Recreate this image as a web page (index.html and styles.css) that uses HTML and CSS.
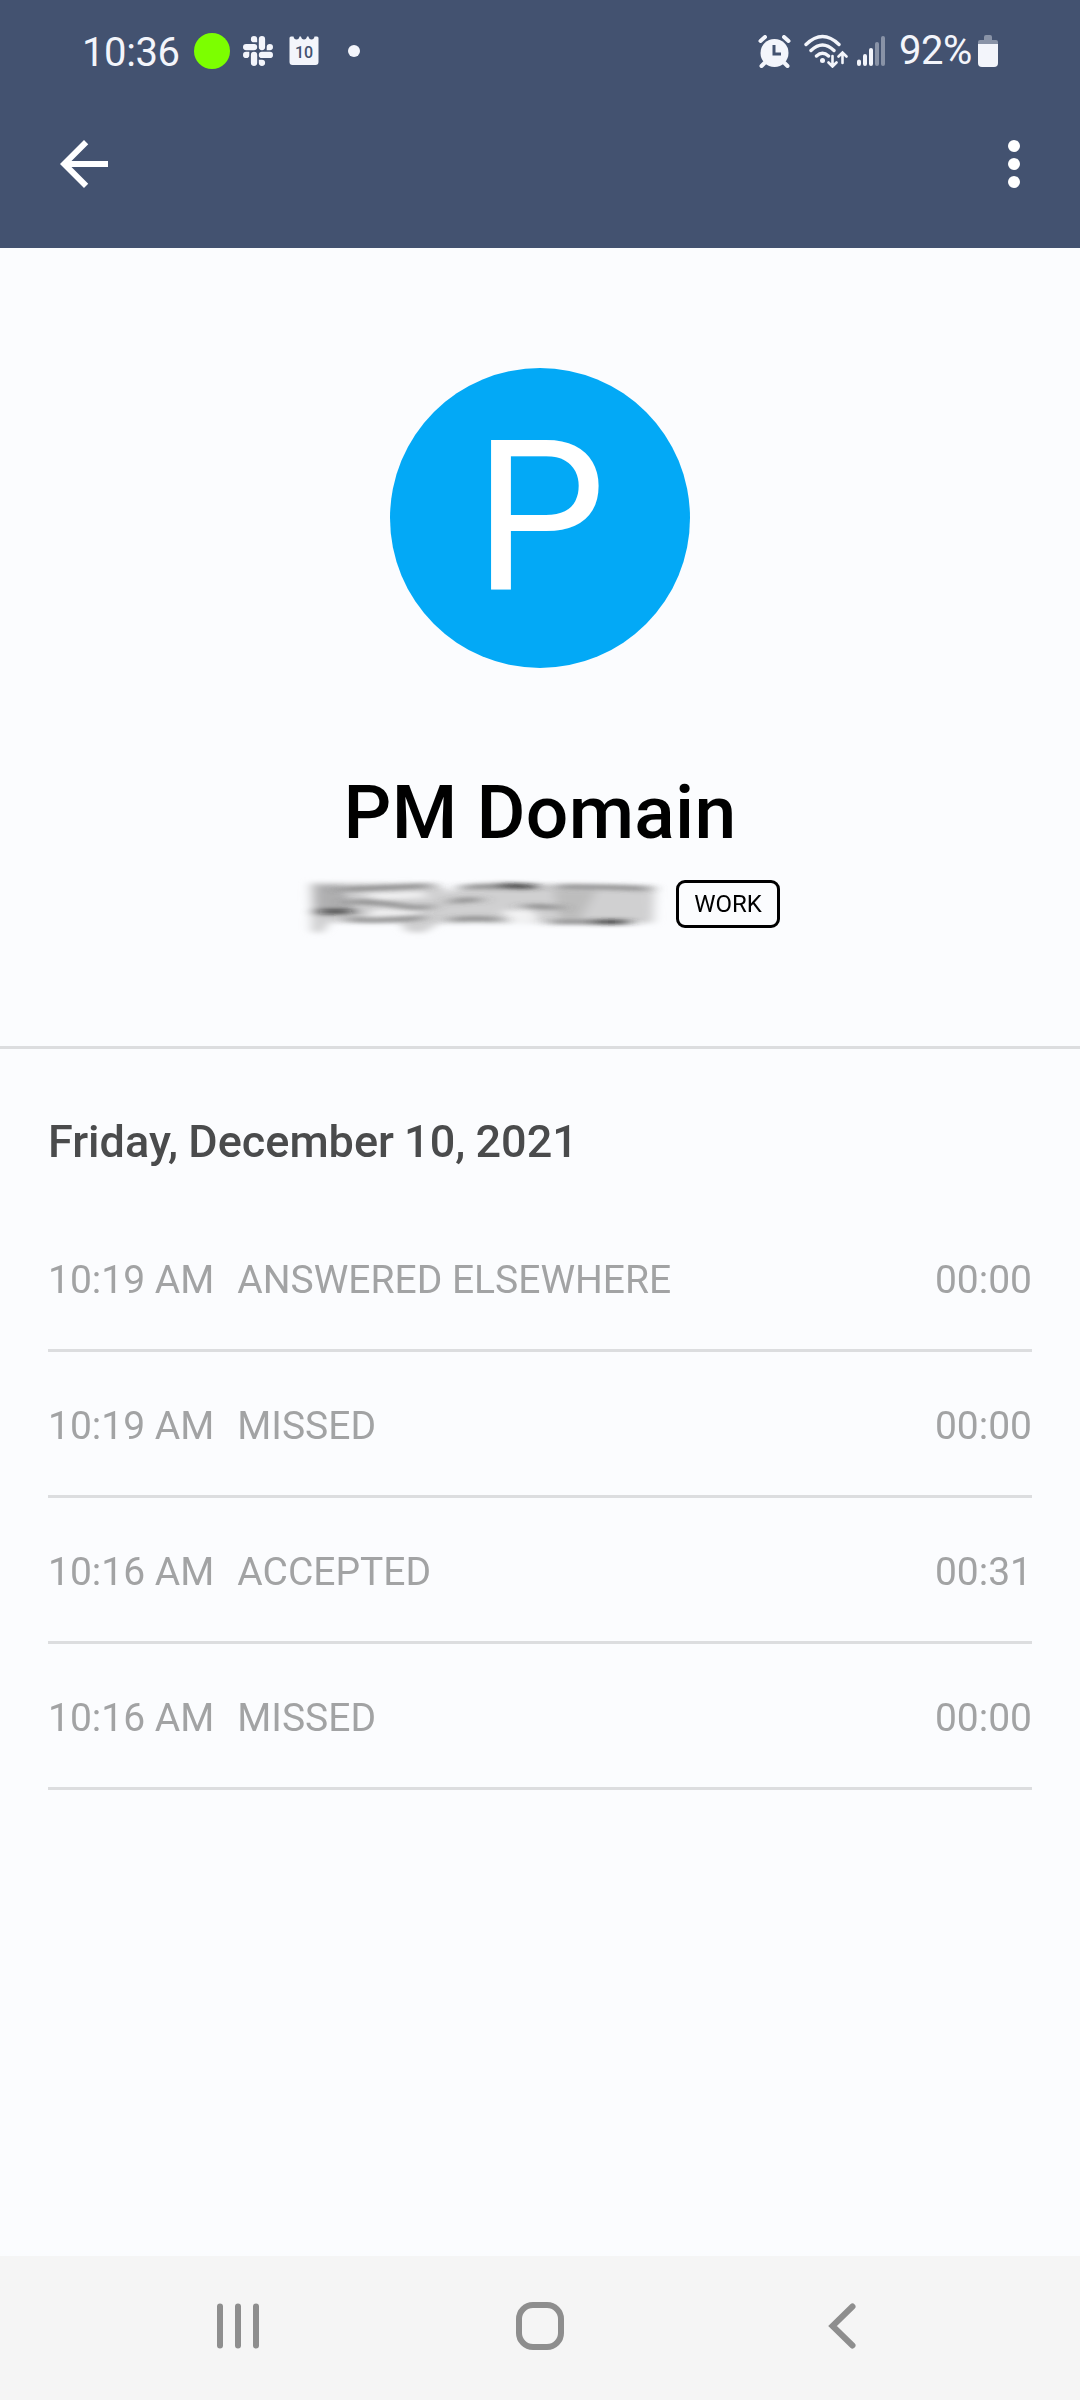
FILE: index.html
```html
<!DOCTYPE html>
<html lang="en">
<head>
    <meta charset="UTF-8">
    <meta name="viewport" content="width=device-width, initial-scale=1.0">
    <title>PM Domain</title>
    <link rel="stylesheet" href="styles.css">
</head>
<body>
    <header class="header">
        <div class="status-bar">
            <span class="clock">10:36</span>
            <span class="green-dot"></span>
            <svg class="slack" viewBox="0 0 24 24">
                <defs>
                    <path id="slack-arm" d="M8.83 5.04a2.52 2.52 0 1 1 2.52-2.52v2.52zM8.83 6.31a2.52 2.52 0 0 1 0 5.04H2.52a2.52 2.52 0 0 1 0-5.04z"/>
                </defs>
                <use href="#slack-arm"/>
                <use href="#slack-arm" transform="rotate(90 12 12)"/>
                <use href="#slack-arm" transform="rotate(180 12 12)"/>
                <use href="#slack-arm" transform="rotate(270 12 12)"/>
            </svg>
            <svg class="calendar" viewBox="0 0 30 30">
                <path d="M.5 2Q.5.5 2 .5h2.500q.5 3 3 3t3-3h1.500q.5 3 3 3t3-3h1.500q.5 3 3 3t3-3h2.500q1.500 0 1.500 1.500v24q0 3-3 3h-23q-3 0-3-3z"/>
                <text x="15" y="21.500" text-anchor="middle">10</text>
            </svg>
            <span class="more-dot"></span>
            <div class="status-right">
                <svg class="alarm" viewBox="0 0 33 33">
                    <circle cx="16.500" cy="18" r="14"/>
                    <path class="line" d="M2.500 6l4.500-4M30.500 6L26 2M6.500 28l-3 3M26.500 28l3 3"/>
                    <path class="hand" d="M16 10v9h7"/>
                </svg>
                <svg class="wifi" viewBox="0 0 44 34">
                    <path d="M2 10.500q16.500-16 33 0M7 16.500q11.500-11 23 0M12.500 22q6-5.500 12 0"/>
                    <circle cx="18.500" cy="26.500" r="2.500"/>
                    <path class="arrows" d="M28.500 22v10M24.500 28.500l4 4 4-4M38.500 29V19M34.500 22.500l4-4 4 4"/>
                </svg>
                <svg class="signal" viewBox="0 0 28 30">
                    <path d="M2 25.500v2.500M8 20v8M14 14v14"/>
                    <path class="dim" d="M20 8v20M26 2v26"/>
                </svg>
                <span class="percent">92%</span>
                <svg class="battery" viewBox="0 0 20 32">
                    <path class="dim" d="M0 9V7q0-2 2-2h4V2q0-2 2-2h4q2 0 2 2v3h4q2 0 2 2v2z"/>
                    <path d="M0 9h20v19q0 4-4 4H4q-4 0-4-4z"/>
                </svg>
            </div>
        </div>
        <div class="toolbar">
            <svg class="tool-icon" viewBox="0 0 24 24">
                <path d="M20 11H7.830l5.590-5.590L12 4l-8 8 8 8 1.410-1.410L7.830 13H20z"/>
            </svg>
            <svg class="tool-icon" viewBox="0 0 24 24">
                <circle cx="12" cy="6" r="2"/>
                <circle cx="12" cy="12" r="2"/>
                <circle cx="12" cy="18" r="2"/>
            </svg>
        </div>
    </header>

    <section class="contact">
        <div class="avatar">P</div>
        <h1>PM Domain</h1>
        <div class="number-row">
            <!-- smudged phone number -->
            <svg class="number" viewBox="60 390 1056 144">
                <defs>
                    <filter id="soft" x="-10%" y="-40%" width="120%" height="180%">
                        <feGaussianBlur stdDeviation="16 8"/>
                    </filter>
                    <filter id="streak" x="-10%" y="-40%" width="120%" height="180%">
                        <feGaussianBlur stdDeviation="26 6"/>
                    </filter>
                </defs>
                <g filter="url(#soft)">
                    <path fill="#d0d0d1" d="M90 398L470 402 505 425 600 402 1125 408 1120 518 480 518 430 548 380 545 360 516 150 516 125 550 95 545z"/>
                    <path fill="#999" opacity=".6" d="M105 405h75l50 80-120 10z"/>
                    <path fill="#f2f2f3" d="M240 430l180-5 30 15-150 12zM660 485l90-10 30 38-80 5zM290 478l150 0-40 18-150 8z"/>
                    <path fill="#aaa" opacity=".5" d="M820 420h130l-50 90h-60z"/>
                </g>
                <g class="streaks" filter="url(#streak)">
                    <path d="M180 418q140-4 270-12"/>
                    <path d="M205 456q90-2 160 12t90-4"/>
                    <path class="dark" d="M120 485h95"/>
                    <path d="M200 508q120 8 230-6"/>
                    <path d="M510 458q40-12 90-8"/>
                    <path d="M540 412q80-6 210 0"/>
                    <path class="dark" d="M660 405l110 5"/>
                    <path d="M730 470q60-4 110 4"/>
                    <path d="M510 510q80-8 150 0"/>
                    <path d="M830 410q140-2 275 6"/>
                    <path d="M810 516h240"/>
                    <path class="dark" d="M940 516h100"/>
                </g>
            </svg>
            <span class="badge">WORK</span>
        </div>
    </section>

    <section class="history">
        <h2>Friday, December 10, 2021</h2>
        <div class="call">
            <span class="time">10:19 AM</span>
            <span class="state">ANSWERED ELSEWHERE</span>
            <span class="duration">00:00</span>
        </div>
        <div class="call">
            <span class="time">10:19 AM</span>
            <span class="state">MISSED</span>
            <span class="duration">00:00</span>
        </div>
        <div class="call">
            <span class="time">10:16 AM</span>
            <span class="state">ACCEPTED</span>
            <span class="duration">00:31</span>
        </div>
        <div class="call">
            <span class="time">10:16 AM</span>
            <span class="state">MISSED</span>
            <span class="duration">00:00</span>
        </div>
    </section>

    <nav class="nav-bar">
        <svg viewBox="0 0 48 48">
            <path d="M6 4.500v39M24 4.500v39M42 4.500v39"/>
        </svg>
        <svg viewBox="0 0 48 48">
            <rect x="3" y="3" width="42" height="42" rx="14"/>
        </svg>
        <svg viewBox="0 0 48 48">
            <path d="M34.500 4.500L14.500 24l20 19.500"/>
        </svg>
    </nav>
</body>
</html>
```
FILE: styles.css
```css
* {
    box-sizing: border-box;
}
body {
    margin: 0;
    width: 1080px;
    height: 2400px;
    display: flex;
    flex-direction: column;
    font-family: Roboto, sans-serif;
    background-color: #fbfcfe;
    overflow: hidden;
}
svg {
    display: block;
    flex: none;
}
h1, h2 {
    margin: 0;
    font-weight: 500;
}

/* header */
.header {
    height: 248px;
    background-color: #435270;
    color: #f3f5fb;
}
.status-bar {
    display: flex;
    align-items: center;
    height: 102px;
    padding: 0 82px;
    fill: #f3f5fb;
}
.clock {
    width: 112px;
    font-size: 40px;
    line-height: 46px;
    letter-spacing: -0.4px;
    padding-top: 4px;
}
.green-dot {
    width: 36px;
    height: 36px;
    border-radius: 50%;
    background-color: #7cff00;
}
.slack {
    width: 30px;
    height: 30px;
    margin-left: 13px;
}
.calendar {
    width: 30px;
    height: 30px;
    margin-left: 16px;
}
.calendar text {
    font-size: 16px;
    font-weight: 500;
    fill: #435270;
}
.more-dot {
    width: 12px;
    height: 12px;
    margin-left: 29px;
    border-radius: 50%;
    background-color: #f3f5fb;
}
.status-right {
    display: flex;
    align-items: center;
    margin-left: auto;
    height: 100px;
}
.alarm {
    width: 33px;
    height: 33px;
}
.alarm .line {
    stroke: #f3f5fb;
    stroke-width: 4;
    stroke-linecap: round;
}
.alarm .hand {
    fill: none;
    stroke: #435270;
    stroke-width: 3;
}
.wifi {
    width: 44px;
    height: 34px;
    margin-left: 13px;
}
.wifi path {
    fill: none;
    stroke: #f3f5fb;
    stroke-width: 3.4;
    stroke-linecap: round;
}
.wifi .arrows {
    stroke-width: 2.6;
}
.signal {
    width: 28px;
    height: 30px;
    margin-left: 9px;
}
.signal path {
    stroke: #f3f5fb;
    stroke-width: 4;
    stroke-linecap: round;
}
.dim {
    opacity: 0.4;
}
.percent {
    width: 79px;
    margin-left: 14px;
    font-size: 40px;
    line-height: 46px;
    letter-spacing: -0.5px;
    white-space: nowrap;
}
.battery {
    width: 20px;
    height: 32px;
}
.toolbar {
    display: flex;
    justify-content: space-between;
    padding: 26px 30px 0 48px;
}
.tool-icon {
    width: 72px;
    height: 72px;
    fill: #fff;
}

/* contact */
.contact {
    display: flex;
    flex-direction: column;
    align-items: center;
    height: 801px;
    padding-top: 120px;
    border-bottom: 3px solid #dcdddf;
}
.avatar {
    width: 300px;
    height: 300px;
    border-radius: 50%;
    background-color: #03a9f6;
    color: #fff;
    font-size: 210px;
    line-height: 301px;
    text-align: center;
}
h1 {
    margin-top: 100px;
    font-size: 75px;
    line-height: 88px;
    letter-spacing: 0.3px;
    color: #000;
}
.number-row {
    display: flex;
    gap: 24px;
    margin-top: 24px;
}
.number {
    width: 352px;
    height: 48px;
    overflow: visible;
}
.streaks path {
    fill: none;
    stroke: #555;
    stroke-width: 12;
    opacity: 0.65;
}
.streaks .dark {
    stroke: #111;
    opacity: 0.85;
}
.badge {
    width: 104px;
    height: 48px;
    border: 3px solid #000;
    border-radius: 9px;
    font-size: 24px;
    line-height: 42px;
    text-align: center;
    color: #000;
}

/* call history */
.history {
    flex: 1;
    padding: 66px 48px 0;
}
h2 {
    height: 91px;
    font-size: 45px;
    line-height: 54px;
    word-spacing: -1px;
    color: #4a4b4c;
}
.call {
    display: flex;
    height: 146px;
    padding-top: 51px;
    border-bottom: 3px solid #dcdddf;
    font-size: 39px;
    line-height: 46px;
    color: #a2a3a4;
}
.state {
    margin-left: 23px;
}
.duration {
    margin-left: auto;
}

/* system navigation */
.nav-bar {
    display: flex;
    align-items: center;
    justify-content: space-between;
    height: 144px;
    padding: 0 214px 4px;
    background-color: #f5f5f5;
}
.nav-bar svg {
    width: 48px;
    height: 48px;
    fill: none;
    stroke: #8e8e8e;
    stroke-width: 6;
    stroke-linecap: round;
}
```
